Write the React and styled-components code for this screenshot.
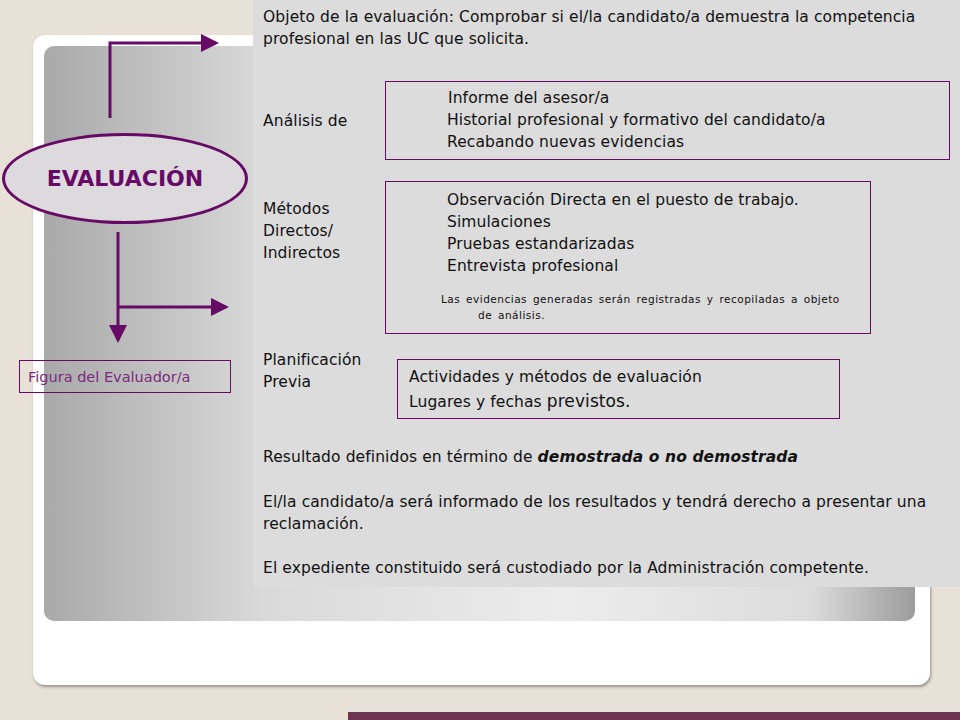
import React from 'react'
import styled, { createGlobalStyle } from 'styled-components'

const Global = createGlobalStyle`
  html, body { margin: 0; padding: 0; }
  body { background: #e7e1d7; font-family: "DejaVu Sans", sans-serif; }
`

const purple = '#660a66'

const Stage = styled.div`
  position: relative;
  width: 960px;
  height: 720px;
  overflow: hidden;
  background: #e7e1d7;
`
const Card = styled.div`
  position: absolute;
  left: 33px;
  top: 35px;
  width: 897px;
  height: 650px;
  background: #fff;
  border-radius: 12px;
  box-shadow: 1px 2px 3px rgba(0, 0, 0, 0.35);
`
const Panel = styled.div`
  position: absolute;
  left: 44px;
  top: 46px;
  width: 871px;
  height: 575px;
  border-radius: 10px;
  background: linear-gradient(90deg, #a9a9a9 0%, #d9d9d9 25%, #ececec 60%, #dcdcdc 88%, #9c9c9c 100%);
`
const FooterBar = styled.div`
  position: absolute;
  left: 348px;
  top: 712px;
  width: 612px;
  height: 8px;
  background: #6f3451;
`
const Diagram = styled.svg`
  position: absolute;
  left: 0;
  top: 0;
`
const Ellipse = styled.div`
  position: absolute;
  left: 2px;
  top: 133px;
  width: 240px;
  height: 85px;
  border: 3px solid ${purple};
  border-radius: 50%;
  background: #dcdadd;
  display: flex;
  align-items: center;
  justify-content: center;
  color: ${purple};
  font-weight: bold;
  font-size: 22px;
`
const RoleBox = styled.div`
  position: absolute;
  left: 19px;
  top: 360px;
  width: 212px;
  height: 33px;
  border: 1px solid ${purple};
  display: flex;
  align-items: center;
  padding-left: 8px;
  box-sizing: border-box;
  color: #7d2a7d;
  font-size: 14.5px;
  white-space: nowrap;
`
const Text = styled.div`
  position: absolute;
  left: 253px;
  top: 0;
  width: 707px;
  height: 587px;
  box-sizing: border-box;
  background: #dcdcdc;
  padding: 6px 8px 0 10px;
  color: #111;
  font-size: 15.5px;
  letter-spacing: 0.1px;
  line-height: 22px;
`
const Para = styled.p`
  margin: ${p => p.$mt || 0}px 0 0 0;
`
const Row = styled.div`
  display: flex;
  margin-top: ${p => p.$mt}px;
`
const Label = styled.div`
  width: ${p => p.$w}px;
  padding-top: ${p => p.$pt || 0}px;
  flex-shrink: 0;
`
const Box = styled.div`
  width: ${p => p.$w}px;
  height: ${p => p.$h}px;
  margin-top: ${p => p.$mt || 0}px;
  box-sizing: border-box;
  border: 1px solid ${purple};
  padding: ${p => p.$pad};
  white-space: nowrap;
`
const Small = styled.div`
  margin: 14px 20px 0 -6px;
  padding-left: 37px;
  text-indent: -37px;
  font-size: 10.5px;
  letter-spacing: 0.5px;
  word-spacing: 2px;
  line-height: 16px;
  white-space: normal;
`

export default function App() {
  return (
    <Stage>
      <Global />
      <Card />
      <Panel />
      <FooterBar />
      <Diagram width="260" height="360">
        <defs>
          <marker id="ah" markerWidth="6" markerHeight="6" refX="5" refY="3" orient="auto">
            <path d="M0,0 L6,3 L0,6 z" fill={purple} />
          </marker>
        </defs>
        <g stroke={purple} strokeWidth="3" fill="none">
          <path d="M110 118 V43 H216" markerEnd="url(#ah)" />
          <path d="M118 232 V340" markerEnd="url(#ah)" />
          <path d="M118 307 H226" markerEnd="url(#ah)" />
        </g>
      </Diagram>
      <Ellipse>EVALUACIÓN</Ellipse>
      <RoleBox>Figura del Evaluador/a</RoleBox>
      <Text>
        <Para>Objeto de la evaluación: Comprobar si el/la candidato/a demuestra la competencia profesional en las UC que solicita.</Para>
        <Row $mt={31}>
          <Label $w={122} $pt={29}>Análisis de</Label>
          <Box $w={565} $h={79} $pad="5px 0 0 61px">
            <div style={{ paddingLeft: 1 }}>Informe del asesor/a</div>
            <div>Historial profesional y formativo del candidato/a</div>
            <div>Recabando nuevas evidencias</div>
          </Box>
        </Row>
        <Row $mt={21}>
          <Label $w={122} $pt={17}>Métodos<br />Directos/<br />Indirectos</Label>
          <Box $w={486} $h={153} $pad="7px 0 0 61px">
            <div>Observación Directa en el puesto de trabajo.</div>
            <div>Simulaciones</div>
            <div>Pruebas estandarizadas</div>
            <div>Entrevista profesional</div>
            <Small>Las evidencias generadas serán registradas y recopiladas a objeto de análisis.</Small>
          </Box>
        </Row>
        <Row $mt={15}>
          <Label $w={134}>Planificación<br />Previa</Label>
          <Box $w={443} $h={60} $mt={10} $pad="6px 0 0 11px">
            <div>Actividades y métodos de evaluación</div>
            <div style={{ marginTop: 2 }}>Lugares y fechas <span style={{ fontSize: 17 }}>previstos.</span></div>
          </Box>
        </Row>
        <Para $mt={27}>Resultado definidos en término de <b><i>demostrada o no demostrada</i></b></Para>
        <Para $mt={23}>El/la candidato/a será informado de los resultados y tendrá derecho a presentar una reclamación.</Para>
        <Para $mt={22}>El expediente constituido será custodiado por la Administración competente.</Para>
      </Text>
    </Stage>
  )
}
